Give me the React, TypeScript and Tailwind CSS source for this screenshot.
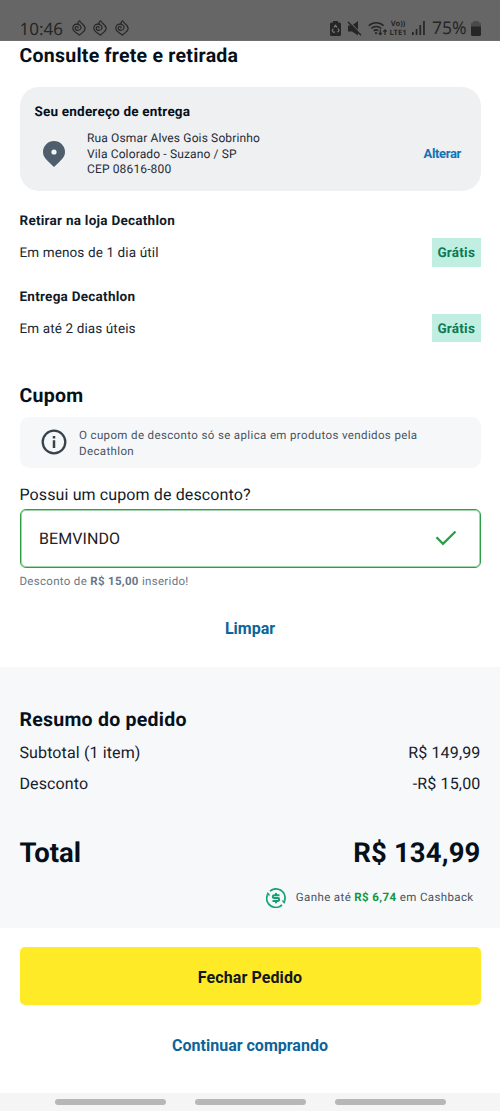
import type { ReactNode } from 'react'
import { clsx } from 'clsx'

const DELIVERY_OPTIONS = [
  { title: 'Retirar na loja Decathlon', time: 'Em menos de 1 dia útil', price: 'Grátis' },
  { title: 'Entrega Decathlon',         time: 'Em até 2 dias úteis',    price: 'Grátis' },
]

const SUMMARY = [
  { label: 'Subtotal (1 item)', value: 'R$ 149,99' },
  { label: 'Desconto',          value: '-R$ 15,00' },
]

function FlameIcon() {
  return (
    <svg viewBox="0 0 14 16" className="w-3.5 h-4" fill="none" stroke="currentColor" strokeWidth={1.2} strokeLinecap="round" strokeLinejoin="round">
      <path d="M6.600 4.500C5.500 3.300 6.100 1.600 7.700 .8c.2 2.200 5.500 3.700 5.500 7.600 0 2.900-2.900 3.900-5.700 6.800C5.500 13.200 1 12.200 .8 8.300.7 5.800 2.500 4.200 4.700 4.200c2.700 0 4.700 1.900 4.300 3.800-.5 2.400-4.200 3.200-5.400 1.400-.9-1.400 0-2.900 1.200-2.900.9 0 1.400.7 1.100 1.400" />
    </svg>
  )
}

function StatusBar() {
  return (
    <header className="h-[41px] shrink-0 bg-[#666] text-[#262626] pl-[19.500px] pr-5 pt-[15px] flex justify-between font-['Noto_Sans',sans-serif] border-b border-[#6e6e6e]">
      <div className="flex items-center h-[26px]">
        <span className="text-[17px] leading-none w-[52px]">10:46</span>
        <div className="flex gap-[7.500px]">
          <FlameIcon />
          <FlameIcon />
          <FlameIcon />
        </div>
      </div>
      <div className="flex items-center h-[26px] -mr-[1px]">
        {/* Battery care */}
        <svg viewBox="0 0 11 15" className="w-[11px] h-[15px]">
          <path d="M3 0h5v1.500h1.500A1.500 1.500 0 0 1 11 3v10.500A1.500 1.500 0 0 1 9.500 15h-8A1.500 1.500 0 0 1 0 13.500V3a1.500 1.500 0 0 1 1.500-1.500H3z" fill="currentColor" />
          <path d="M4 6.300 5.500 4.300 7 6.300M8 7.600l1 2-1.600 1.500M5 11.200H3.200L2.200 9.400l.9-1.600" fill="none" stroke="#777" strokeWidth={1.200} />
        </svg>
        {/* Muted speaker */}
        <svg viewBox="0 0 15 15" className="w-[15px] h-[15px] ml-[6.500px]">
          <path d="M1 4.500h4L11 0v14.500L5 10.500H1z" fill="currentColor" />
          <path d="M1.800 .2 14.800 13.400" stroke="#666" strokeWidth={1.200} />
          <path d="M1 1 14 14.200" stroke="currentColor" strokeWidth={1.500} />
        </svg>
        {/* Wi-Fi with transfer arrows */}
        <svg viewBox="0 0 20 15" className="w-5 h-[15px] ml-[6px]" fill="none" stroke="currentColor" strokeWidth={1.600}>
          <path d="M.8 4.800a10.500 10.500 0 0 1 14.800 0M3.300 7.500a7 7 0 0 1 9.800 0M5.700 10a3.600 3.600 0 0 1 4.600-.3" />
          <circle cx="8" cy="12.200" r="1.100" fill="currentColor" stroke="none" />
          <path d="M12.300 8.500v5M10.600 11.800l1.700 1.800 1.700-1.800M17 14V9M15.300 10.600 17 8.800l1.700 1.800" strokeWidth={1.200} />
        </svg>
        <div className="ml-[1px] mr-[1px] mt-[1px] w-[18px] flex flex-col items-center font-bold text-[7.500px] leading-[8.500px] whitespace-nowrap">
          <span className="h-[8.500px]">Vo))</span>
          <span className="h-[8.500px]">LTE1</span>
        </div>
        <svg viewBox="0 0 13 14" className="w-[13px] h-[14px] ml-1" fill="currentColor">
          <path d="M0 11h1.700v3H0zM3.700 8h1.700v6H3.700zM7.400 4h1.700v10H7.400zM11.100 0h1.700v14h-1.700z" />
        </svg>
        <span className="mt-[2px] text-[17.500px] leading-none ml-[7px] w-[38px]">75%</span>
        <svg viewBox="0 0 10 15" className="w-[10px] h-[15px] ml-[1px]">
          <path d="M2.500 0h5v1.500H8.500A1.500 1.500 0 0 1 10 3v3H0V3a1.500 1.500 0 0 1 1.500-1.500h1z" fill="#4a4a4a" />
          <path d="M0 5.500h10v8a1.500 1.500 0 0 1-1.500 1.500h-7A1.500 1.500 0 0 1 0 13.500z" fill="currentColor" />
        </svg>
      </div>
    </header>
  )
}

function SectionTitle({ children, className }: { children: ReactNode; className?: string }) {
  return (
    <h2 className={clsx('text-[19.500px] leading-6 font-bold tracking-[0.250px] text-[#06101a] whitespace-nowrap', className)}>
      {children}
    </h2>
  )
}

function AddressCard() {
  return (
    <div className="mt-[19px] h-[104.500px] rounded-[19px] bg-[#eff0f2] pl-[15px] pr-[19.500px] pt-4">
      <h3 className="text-[13.500px] leading-[18px] font-bold tracking-[0.200px] text-[#06101a]">Seu endereço de entrega</h3>
      <div className="flex items-center mt-[9px]">
        <svg viewBox="0 0 22 26" className="w-[22px] h-[26px] ml-2">
          <path d="M11 0a11 11 0 0 1 11 11c0 4.500-3 7.200-5.500 9.700L11 26l-5.500-5.300C3 18.200 0 15.500 0 11A11 11 0 0 1 11 0Z" fill="#4f5e6d" />
          <circle cx="11" cy="11" r="2.600" fill="#f4f6f8" />
        </svg>
        <p className="ml-[22.500px] pt-[1.500px] text-[12px] leading-[15.700px] tracking-[0.140px] text-[#1e2b38] whitespace-nowrap">
          Rua Osmar Alves Gois Sobrinho<br />
          Vila Colorado - Suzano / SP<br />
          CEP 08616-800
        </p>
        <button className="ml-auto text-[13px] leading-4 font-bold tracking-[-0.350px] text-[#1273b5]">Alterar</button>
      </div>
    </div>
  )
}

function CouponField() {
  return (
    <div>
      <label className="block mt-[16px] text-[16px] leading-[22px] tracking-[0.120px] text-[#101c28]">Possui um cupom de desconto?</label>
      <div className="mt-[3px] h-[59px] rounded-[6px] border border-[#2ba047] shadow-[inset_0_0_0_1px_#2ba04770] bg-white flex items-center justify-between pl-[18.500px] pr-[22.500px]">
        <span className="pt-0.5 text-[16px] tracking-[0.080px] text-[#222]">BEMVINDO</span>
        <svg viewBox="0 0 22 16" className="w-[22px] h-4" fill="none" stroke="#28a045" strokeWidth={2.300}>
          <path d="M1.500 7.200 8 13.800 20.500 1.500" />
        </svg>
      </div>
      <p className="mt-[5.500px] text-[11.500px] leading-4 tracking-[0.310px] text-[#687787]">
        Desconto de <b className="font-bold">R$ 15,00</b> inserido!
      </p>
    </div>
  )
}

function CashbackIcon() {
  return (
    <svg viewBox="0 0 20 20" className="w-5 h-5" fill="none" stroke="#13a173" strokeWidth={1.800}>
      <path d="M4 3.200A9 9 0 0 1 18.600 12.500M16 16.800A9 9 0 0 1 1.200 7.500" />
      <path d="M15.600 12.400h4.200l-1.600 3.600zM.2 7.600h4.200L1.600 4z" fill="#13a173" stroke="none" />
      <path d="M13.500 7.300H8.200a1.400 1.400 0 0 0 0 2.800h3.600a1.400 1.400 0 0 1 0 2.800H6.500M10 5v2.400M10 13v2.200" strokeWidth={2} />
    </svg>
  )
}

export default function App() {
  return (
    <div className="w-full h-[1111px] bg-white flex flex-col overflow-hidden font-['Roboto',sans-serif] [text-rendering:geometricPrecision]">
      <StatusBar />

      <main className="h-[625.700px] shrink-0 px-[19.500px] pt-[2.500px]">
        <SectionTitle>Consulte frete e retirada</SectionTitle>
        <AddressCard />

        {/* Delivery options */}
        <div className="mt-[21px]">
          {DELIVERY_OPTIONS.map((option) => (
            <div key={option.title} className="h-[75.600px]">
              <h3 className="text-[13.500px] leading-[18px] font-bold tracking-[0.260px] text-[#101c28]">{option.title}</h3>
              <div className="mt-[8px] flex items-center justify-between">
                <span className="pt-[2px] text-[13.500px] tracking-[0.120px] text-[#1a2733]">{option.time}</span>
                <span className="h-[28.500px] w-[48.500px] pt-[2px] flex items-center justify-center bg-[#c0efe1] text-[13.500px] font-bold tracking-[0.250px] text-[#0b7a55]">
                  {option.price}
                </span>
              </div>
            </div>
          ))}
        </div>

        <SectionTitle className="mt-[20.500px]">Cupom</SectionTitle>
        <div className="mt-[9px] h-[51px] rounded-[9px] bg-[#f6f7f9] flex items-center pl-[21.500px]">
          <svg viewBox="0 0 26 26" className="w-[26px] h-[26px]" fill="none" stroke="#35434f" strokeWidth={2.300}>
            <circle cx="13" cy="13" r="11.300" />
            <path d="M13 11.300v7.700M13 7v2.600" strokeWidth={2.500} />
          </svg>
          <p className="ml-[12px] pt-[3px] text-[11.500px] leading-[15.700px] tracking-[0.370px] text-[#46535f]">
            O cupom de desconto só se aplica em produtos vendidos pela<br />
            Decathlon
          </p>
        </div>
        <CouponField />
        <button className="block mx-auto mt-[28.500px] text-[16px] leading-[22px] font-bold text-[#0b649a]">Limpar</button>
      </main>

      {/* Order summary */}
      <section className="h-[261.300px] shrink-0 bg-[#f7f8fa] px-[19.500px] pt-[41.500px] text-[#06101a]">
        <SectionTitle>Resumo do pedido</SectionTitle>
        <div className="mt-[5px]">
          {SUMMARY.map((row) => (
            <div key={row.label} className="h-[31px] flex justify-between text-[16px] leading-[31px] text-[#14202b]">
              <span className="tracking-[0.120px]">{row.label}</span>
              <span className="tracking-[0.160px]">{row.value}</span>
            </div>
          ))}
        </div>
        <div className="mt-[36px] flex justify-between text-[27.500px] leading-9 font-bold">
          <span>Total</span>
          <span className="tracking-[0.150px]">R$ 134,99</span>
        </div>
        <div className="mt-[17px] flex items-center justify-end pr-[7px]">
          <CashbackIcon />
          <span className="ml-[10px] -mt-[1px] text-[11.500px] tracking-[0.380px] text-[#46535f]">
            Ganhe até <b className="font-bold text-[#12963c]">R$ 6,74</b> em Cashback
          </span>
        </div>
      </section>

      {/* Actions */}
      <footer className="h-[165px] shrink-0 px-[19.500px] pt-[19px] text-center">
        <button className="w-full h-[58.500px] pt-[3px] rounded-[5px] bg-[#ffea28] text-[16px] font-bold tracking-[0.100px] text-[#101820]">Fechar Pedido</button>
        <button className="mt-[29.500px] text-[16px] leading-[22px] font-bold text-[#0b649a]">Continuar comprando</button>
      </footer>

      {/* System gesture hints */}
      <nav className="h-[18px] shrink-0 bg-[#f5f5f5] flex items-center justify-center gap-[29px]">
        <span className="w-[111px] h-[6px] rounded-full bg-[#b7b7b7]" />
        <span className="w-[111px] h-[6px] rounded-full bg-[#b7b7b7]" />
        <span className="w-[111px] h-[6px] rounded-full bg-[#b7b7b7]" />
      </nav>
    </div>
  )
}
